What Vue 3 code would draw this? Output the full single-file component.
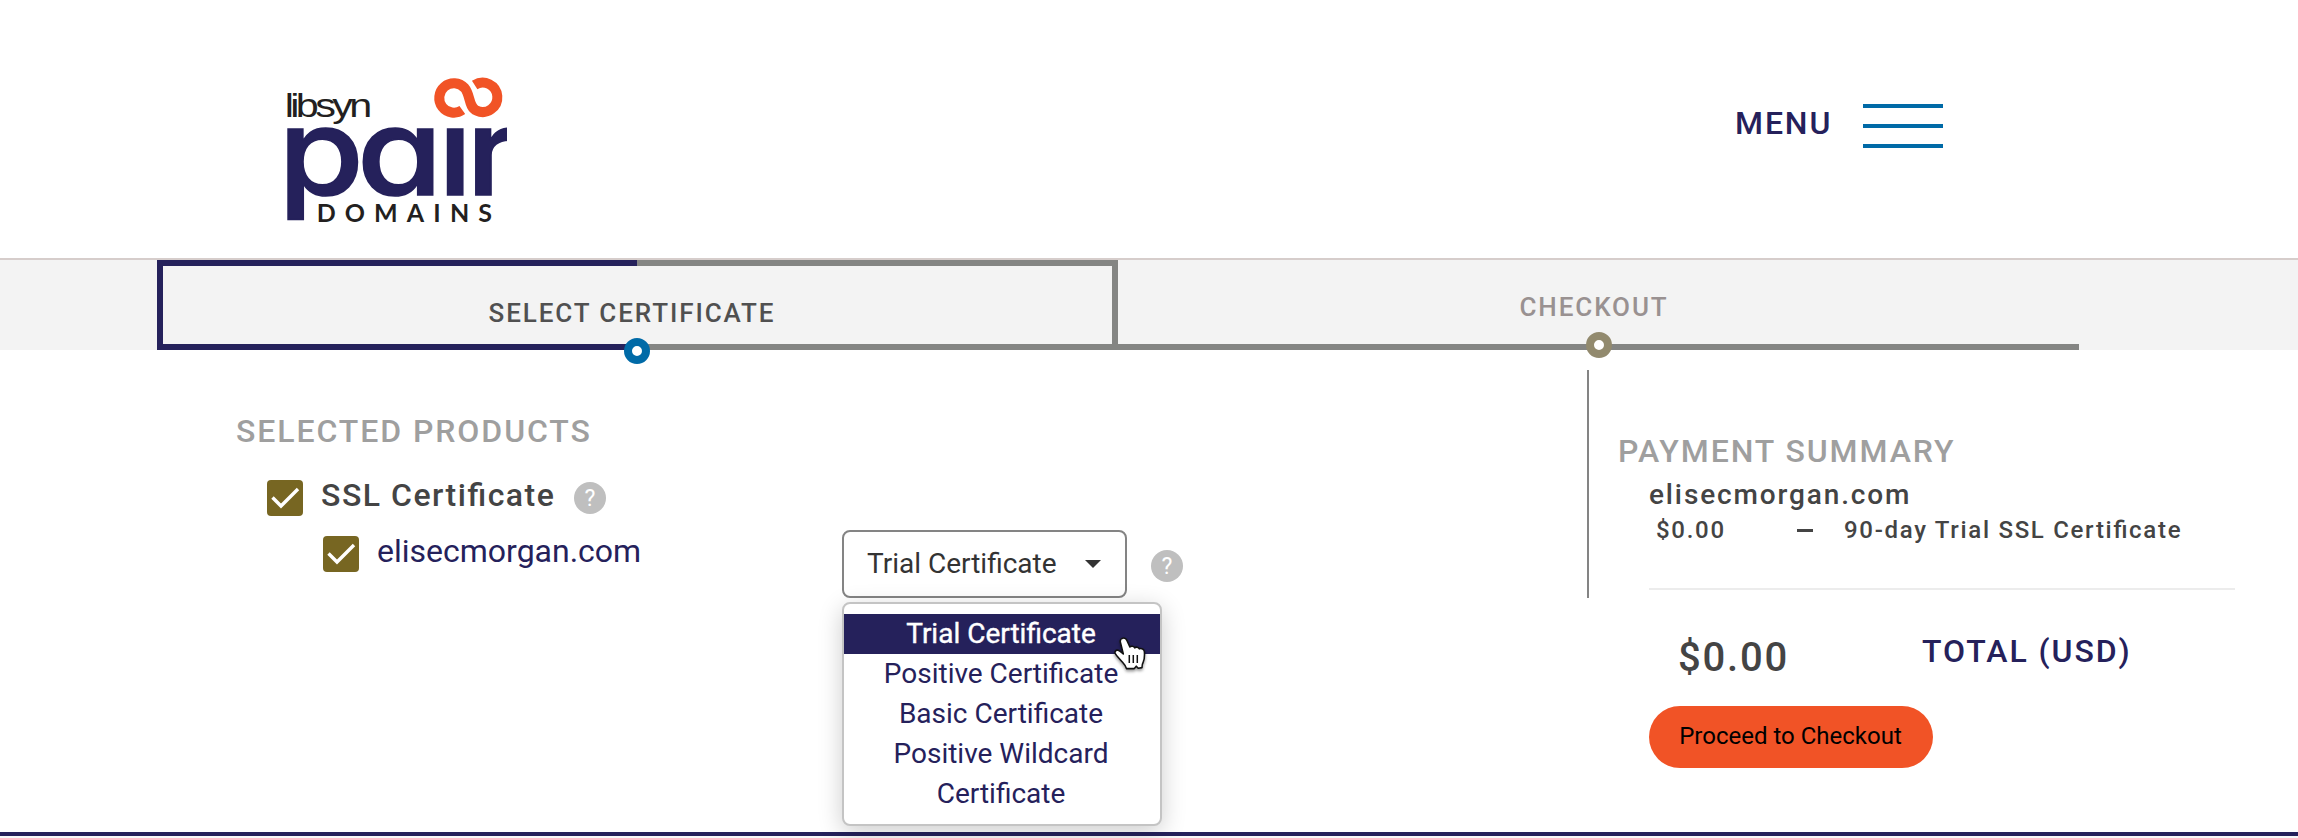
<script setup>
import { ref } from 'vue'

const options = ['Trial Certificate', 'Positive Certificate', 'Basic Certificate', 'Positive Wildcard Certificate']
const selected = ref(options[0])
</script>

<template>
  <div class="page">
    <header class="header">
      <svg class="logo" viewBox="0 0 810 540" width="270" height="180">
        <defs>
          <clipPath id="word"><rect x="0" y="192" width="741" height="294" /></clipPath>
        </defs>
        <text class="libsyn" transform="translate(74 170) scale(1.280 1)">libsyn</text>
        <g clip-path="url(#word)">
          <text class="pair" transform="translate(0 404.500) scale(1.140 1)" x="48.200 255 467.500 542">pair</text>
        </g>
        <text class="domains" x="170" y="486" textLength="526">DOMAINS</text>
        <path class="loop" d="M607 150 A44 44 0 1 1 614 84 C632 105 625 142 650 152 A44 44 0 1 0 644 75" />
      </svg>
      <div class="menu">
        <span class="menu-label">MENU</span>
        <span class="bars"><i></i><i></i><i></i></span>
      </div>
    </header>

    <nav class="steps">
      <div class="step active"><span>SELECT CERTIFICATE</span><b class="dot"></b></div>
      <div class="step"><span>CHECKOUT</span><b class="dot"></b></div>
    </nav>

    <main class="content">
      <section class="products">
        <h2>SELECTED PRODUCTS</h2>
        <div class="row ssl">
          <svg class="check" viewBox="0 0 36 36"><rect width="36" height="36" rx="4" /><path d="M5.5 17.5 L14 26 L31 9" /></svg>
          <span class="ssl-text">SSL Certificate</span>
          <svg class="help" viewBox="0 0 32 32"><circle cx="16" cy="16" r="16" /><text x="16" y="24">?</text></svg>
        </div>
        <div class="row domain">
          <svg class="check" viewBox="0 0 36 36"><rect width="36" height="36" rx="4" /><path d="M5.5 17.5 L14 26 L31 9" /></svg>
          <span class="domain-text">elisecmorgan.com</span>
        </div>
      </section>

      <section class="picker">
        <div class="select">
          <span>{{ selected }}</span>
          <svg width="16" height="8" viewBox="0 0 16 8"><path d="M0 0H16L8 8Z" fill="#333" /></svg>
          <ul class="dropdown">
            <li v-for="o in options" :key="o" :class="{ on: o === selected }" @click="selected = o">{{ o }}</li>
          </ul>
          <svg class="cursor" width="44" height="46" viewBox="0 0 44 46">
            <path d="M11 4.400C13 3.600 15 4.400 15.900 6.300L18.900 13C20 11.800 22.800 12 23.700 13.800C25 12.700 27.500 12.900 28.400 14.800C30.600 13.900 33.200 15.200 33.400 17.700C33.700 22 33.700 25 32.200 28.200C31.200 30 31 31.300 31 33.600L27.200 34.200L25.300 32.200L23.300 34.600H15.500C14.600 31.300 12.500 29.400 10.400 27C8.300 24.500 5.600 22 4.300 19.700C3.200 17.600 4.900 15.600 7.200 16.300C9 16.900 10.300 18.200 12.300 19.900L9.500 8.800C9 7 9.300 5.200 11 4.400Z" fill="#fff" stroke="#111" stroke-width="1.600" stroke-linejoin="round" />
            <path d="M18.300 21v8M22.300 21v8M26.300 21v8" stroke="#111" stroke-width="1.500" />
          </svg>
        </div>
        <svg class="help" viewBox="0 0 32 32"><circle cx="16" cy="16" r="16" /><text x="16" y="24">?</text></svg>
      </section>

      <div class="divider"></div>

      <section class="summary">
        <h2>PAYMENT SUMMARY</h2>
        <div class="detail">
          <div class="site">elisecmorgan.com</div>
          <div class="line"><span class="price">$0.00</span><span class="dash"></span><span class="item">90-day Trial SSL Certificate</span></div>
          <div class="rule"></div>
          <div class="total"><span class="amount">$0.00</span><span class="total-label">TOTAL (USD)</span></div>
          <button class="checkout">Proceed to Checkout</button>
        </div>
      </section>
    </main>
    <footer class="footer"></footer>
  </div>
</template>

<style>
body { margin: 0; overflow: hidden; background: #fff; }
</style>

<style scoped>
.page { width: 2298px; height: 838px; overflow: hidden; font-family: Roboto, sans-serif; display: flex; flex-direction: column; }
.page * { box-sizing: border-box; }
.header { height: 258px; display: flex; justify-content: space-between; padding: 60px 355px 0 260px; flex: none; }
.logo { display: block; }
.libsyn { font: 97px "Liberation Sans", Arial, sans-serif; letter-spacing: -8.500px; fill: #231f20; }
.pair { font: 500 364px Inter, sans-serif; font-feature-settings: "cv11"; fill: #25215b; stroke: #25215b; stroke-width: 5; }
.domains { font: 700 75px Lato, sans-serif; fill: #231f20; }
.loop { fill: none; stroke: #f15326; stroke-width: 30; }
.menu { display: flex; height: 44px; margin-top: 44px; }
.menu-label { font-size: 32px; line-height: 38px; font-weight: 500; letter-spacing: 1.900px; color: #25215b; width: 128px; }
.bars { width: 80px; display: flex; flex-direction: column; justify-content: space-between; }
.bars i { height: 4px; background: #006aa7; }
.steps { height: 92px; flex: none; border-top: 2px solid #d6cdcb; background: #f3f3f3; display: flex; padding-left: 157px; }
.step { position: relative; width: 961px; height: 90px; border-bottom: 6px solid #848583; text-align: center; font-size: 26px; font-weight: 500; letter-spacing: 1.900px; color: #999191; line-height: 30px; padding-top: 32px; }
.step.active {
  border: 0;
  padding: 38px 17px 0 6px;
  color: #505050;
  background:
    linear-gradient(#25215b, #25215b) 0 0 / 480px 6px no-repeat,
    linear-gradient(#25215b, #25215b) 0 100% / 480px 6px no-repeat,
    linear-gradient(#25215b, #25215b) 0 0 / 6px 100% no-repeat,
    linear-gradient(#848583, #848583) 0 0 / 100% 6px no-repeat,
    linear-gradient(#848583, #848583) 0 100% / 100% 6px no-repeat,
    linear-gradient(#848583, #848583) 100% 0 / 6px 100% no-repeat;
}
.step:last-child span { padding-right: 9px; }
.dot { position: absolute; left: 468px; bottom: -14px; width: 26px; height: 26px; border-radius: 50%; border: 8px solid #928a6e; background: #fff; }
.active .dot { left: 467px; bottom: -14px; border-color: #006aa7; }
.content { height: 482px; flex: none; display: flex; }
h2 { margin: 0; font-size: 32px; font-weight: 500; line-height: 40px; letter-spacing: 1.920px; color: #9f9f9f; white-space: nowrap; }
.products { width: 842px; padding: 61px 0 0 236px; }
.row { display: flex; }
.ssl { margin: 29px 0 0 31px; height: 36px; }
.domain { margin: 20px 0 0 87px; height: 36px; }
.check { width: 36px; height: 36px; margin-right: 18px; flex: none; }
.check rect { fill: #776622; }
.check path { fill: none; stroke: #fff; stroke-width: 3.4; }
.ssl-text { font-size: 32px; font-weight: 500; letter-spacing: 1.500px; font-feature-settings: "liga" 1; line-height: 32px; color: #444; width: 253px; margin-top: -1px; white-space: nowrap; }
.domain-text { font-size: 32px; line-height: 32px; color: #25215b; margin-top: -1px; }
.help { width: 32px; height: 32px; flex: none; margin-top: 2px; }
.help circle { fill: #bfbfbf; }
.help text { fill: #fff; font-size: 23px; text-anchor: middle; }
.picker { display: flex; align-items: flex-start; width: 745px; padding-top: 180px; }
.picker .help { margin: 20px 0 0 24px; }
.select { position: relative; width: 285px; height: 68px; border: 2px solid #848484; border-radius: 8px; display: flex; align-items: center; justify-content: space-between; padding: 0 24px; font-size: 28px; line-height: 40px; color: #333; background: #fff; }
.select > span { margin-left: -1px; }
.dropdown { position: absolute; left: -2px; top: 70px; width: 320px; height: 224px; margin: 0; padding: 10px 0; list-style: none; background: #fff; border: 2px solid #c4c4c4; border-radius: 8px; box-shadow: 0 6px 24px rgba(0, 0, 0, .2); color: #25215b; text-align: center; }
.dropdown li { padding: 0 31px 0 29px; }
.dropdown .on { background: #25215b; color: #fff; -webkit-text-stroke: .4px #fff; }
.cursor { position: absolute; left: 267px; top: 102px; filter: drop-shadow(0 2px 1.500px rgba(0, 0, 0, .4)); z-index: 2; }
.divider { width: 2px; height: 228px; margin-top: 20px; background: #848484; }
.summary { padding: 81px 0 0 29px; }
.detail { padding-left: 31px; }
.site { font-size: 28px; font-weight: 500; letter-spacing: 1.870px; line-height: 36px; color: #444; margin-top: 6px; }
.line { display: flex; font-size: 24px; font-weight: 500; letter-spacing: 1.700px; color: #444; line-height: 30px; margin-top: 2px; padding-left: 7px; }
.price { width: 141px; }
.dash { width: 16px; height: 3px; background: #444; margin: 14px 31px 0 0; }
.item { white-space: nowrap; font-feature-settings: "liga" 1; }
.rule { width: 586px; height: 2px; background: #ececec; margin-top: 43px; }
.total { display: flex; padding-left: 29px; height: 116px; }
.amount { font-size: 40px; font-weight: 500; letter-spacing: 1.800px; color: #444; width: 244px; line-height: 48px; margin-top: 44px; }
.total-label { font-size: 32px; font-weight: 500; letter-spacing: 1.950px; color: #25215b; line-height: 40px; margin-top: 41px; }
.checkout { display: block; width: 284px; height: 62px; border: 0; border-radius: 31px; background: #f15326; color: #000; font: 24px Roboto, sans-serif; padding: 0 1px 2px 0; }
.footer { height: 6px; flex: none; border-top: 4px solid #25215b; background: #f8f8f8; }
</style>
